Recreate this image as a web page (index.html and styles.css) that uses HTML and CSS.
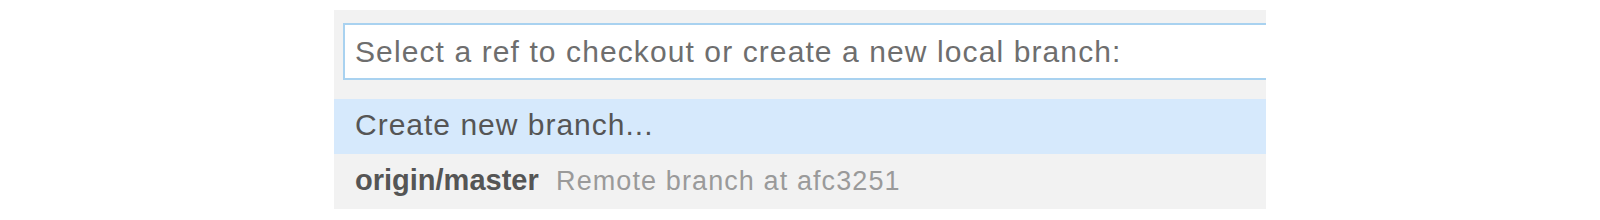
FILE: index.html
```html
<!DOCTYPE html>
<html lang="en">
<head>
    <meta charset="UTF-8">
    <title>Checkout ref</title>
    <link rel="stylesheet" href="styles.css">
</head>
<body>
    <div class="quick-pick">
        <div class="quick-pick-input">
            <input type="text" placeholder="Select a ref to checkout or create a new local branch:">
        </div>
        <div class="quick-pick-list">
            <div class="quick-pick-item selected">Create new branch...</div>
            <div class="quick-pick-item">
                <span class="label">origin/master</span>
                <span class="description">Remote branch at afc3251</span>
            </div>
        </div>
    </div>
</body>
</html>
```

FILE: styles.css
```css
body {
    margin: 0;
    background: #fff;
    font-family: "Liberation Sans", Arial, sans-serif;
}
.quick-pick {
    margin: 10px 0 0 334px;
    width: 932px;
    height: 199px;
    background: #f2f2f2;
    overflow: hidden;
}
.quick-pick-input {
    padding: 13px 0 0 9px;
}
.quick-pick-input input {
    box-sizing: border-box;
    width: 960px;
    height: 57px;
    border: 2px solid #a9d2f0;
    background: #fff;
    padding: 0 0 0 10px;
    font-family: inherit;
    font-size: 30px;
    letter-spacing: 1.1px;
    outline: none;
}
.quick-pick-input input::placeholder {
    color: #6e6e6e;
}
.quick-pick-list {
    margin-top: 19px;
}
.quick-pick-item {
    height: 55px;
    line-height: 51px;
    padding-left: 21px;
    font-size: 30px;
    letter-spacing: 1px;
    color: #555;
    white-space: nowrap;
}
.quick-pick-item.selected {
    background: #d6e9fc;
}
.label {
    font-size: 29px;
    font-weight: bold;
    letter-spacing: 0;
    color: #555;
}
.description {
    margin-left: 8px;
    font-size: 27px;
    letter-spacing: 1.1px;
    color: #9a9a9a;
}
```
